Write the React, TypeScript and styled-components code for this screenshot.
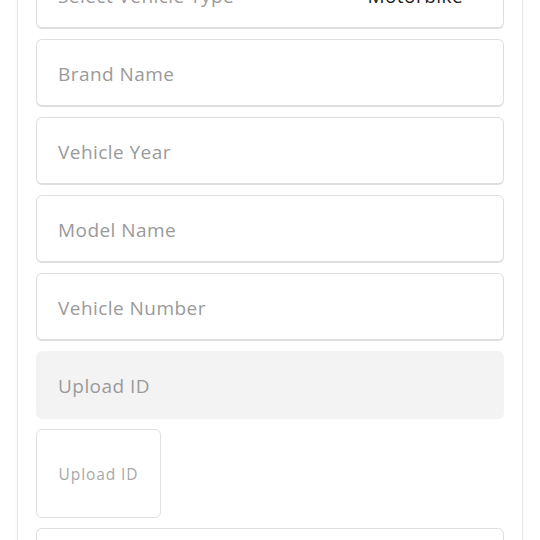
import React from 'react';
import styled, {createGlobalStyle} from 'styled-components';

const GlobalStyle = createGlobalStyle`
  body {
    margin: 0;
    background: #ffffff;
    font-family: 'Open Sans', 'Liberation Sans', sans-serif;
  }
`;

const Page = styled.div`
  height: 540px;
  overflow: hidden;
`;

const Card = styled.div`
  margin: -61px 17px 0;
  padding: 21px 18px 20px;
  border: 1px solid #e6e6e6;
  border-radius: 4px;
  box-shadow: 0 0 3px rgba(0, 0, 0, 0.06);
  display: flex;
  flex-direction: column;
  gap: 10px;
`;

const Field = styled.div<{ filled?: boolean }>`
  height: 68px;
  box-sizing: border-box;
  border: 1px solid ${(props) => (props.filled ? '#f3f3f3' : '#dedede')};
  border-bottom-width: 2px;
  border-radius: 6px;
  background: ${(props) => (props.filled ? '#f3f3f3' : '#ffffff')};
  padding: 2px 40px 0 21px;
  display: flex;
  align-items: center;
  justify-content: space-between;
`;

const Placeholder = styled.span`
  font-size: 19px;
  letter-spacing: 0.45px;
  color: #9a9a9a;
`;

const Value = styled.span`
  font-size: 19px;
  letter-spacing: 0.45px;
  color: #222222;
`;

const UploadBox = styled.div`
  width: 125px;
  height: 89px;
  box-sizing: border-box;
  border: 1px solid #e0e0e0;
  border-radius: 6px;
  display: flex;
  align-items: center;
  justify-content: center;
  font-size: 15.5px;
  letter-spacing: 0.9px;
  color: #a8a8a8;
`;

const fields = ['Brand Name', 'Vehicle Year', 'Model Name', 'Vehicle Number'];

export default function App() {
    return (
        <Page>
            <GlobalStyle/>
            <Card>
                <Field>
                    <Placeholder>Select Vehicle Type</Placeholder>
                    <Value>Motorbike</Value>
                </Field>
                {fields.map((name) => (
                    <Field key={name}>
                        <Placeholder>{name}</Placeholder>
                    </Field>
                ))}
                <Field filled>
                    <Placeholder>Upload ID</Placeholder>
                </Field>
                <UploadBox>Upload ID</UploadBox>
                <Field/>
            </Card>
        </Page>
    );
}
